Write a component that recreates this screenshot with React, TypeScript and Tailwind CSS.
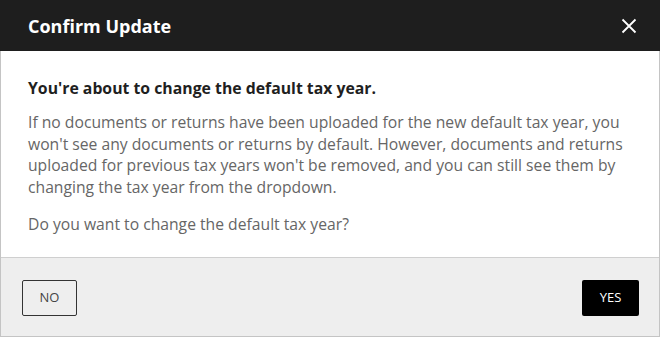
import React from "react";

export default function App() {
  return (
    <div className="w-[660px] h-[337px] bg-white" style={{ fontFamily: '"Open Sans", sans-serif' }}>
      <div className="flex h-full w-full flex-col border border-[#c4c4c4] border-t-[#bdbdbd]">
        <div className="-mx-px -mt-px flex h-[51px] shrink-0 items-center justify-between bg-[#1e1e1e] pl-[28px] pr-[21px]">
          <h1 className="text-[18px] font-bold leading-none text-white">Confirm Update</h1>
          <button className="flex h-[20px] w-[20px] items-center justify-center" aria-label="Close">
            <svg width="16" height="16" viewBox="0 0 16 16" fill="none">
              <path d="M1.5 1.5L14.5 14.5M14.5 1.5L1.5 14.5" stroke="white" strokeWidth="1.8" />
            </svg>
          </button>
        </div>
        <div className="flex-1 px-[27px] pt-[26px]">
          <h2 className="text-[15.8px] font-bold leading-[22px] text-[#1f1f1f]">
            You're about to change the default tax year.
          </h2>
          <p className="mt-[13px] text-[15.7px] leading-[21.7px] text-[#666666]">
            If no documents or returns have been uploaded for the new default tax year, you won't see any documents or returns by default. However, documents and returns uploaded for previous tax years won't be removed, and you can still see them by changing the tax year from the dropdown.
          </p>
          <p className="mt-[15px] text-[15.7px] leading-[21.7px] text-[#666666]">
            Do you want to change the default tax year?
          </p>
        </div>
        <div className="flex h-[79px] shrink-0 items-center justify-between border-t border-[#cfcfcf] bg-[#eeeeee] pl-[21px] pr-[20px] pt-[2px]">
          <button className="flex h-[36px] w-[55px] items-center justify-center rounded-[2px] border border-[#333333] text-[13px] text-[#444444]">
            NO
          </button>
          <button className="flex h-[36px] w-[57px] items-center justify-center rounded-[2px] bg-black text-[13px] text-white">
            YES
          </button>
        </div>
      </div>
    </div>
  );
}
